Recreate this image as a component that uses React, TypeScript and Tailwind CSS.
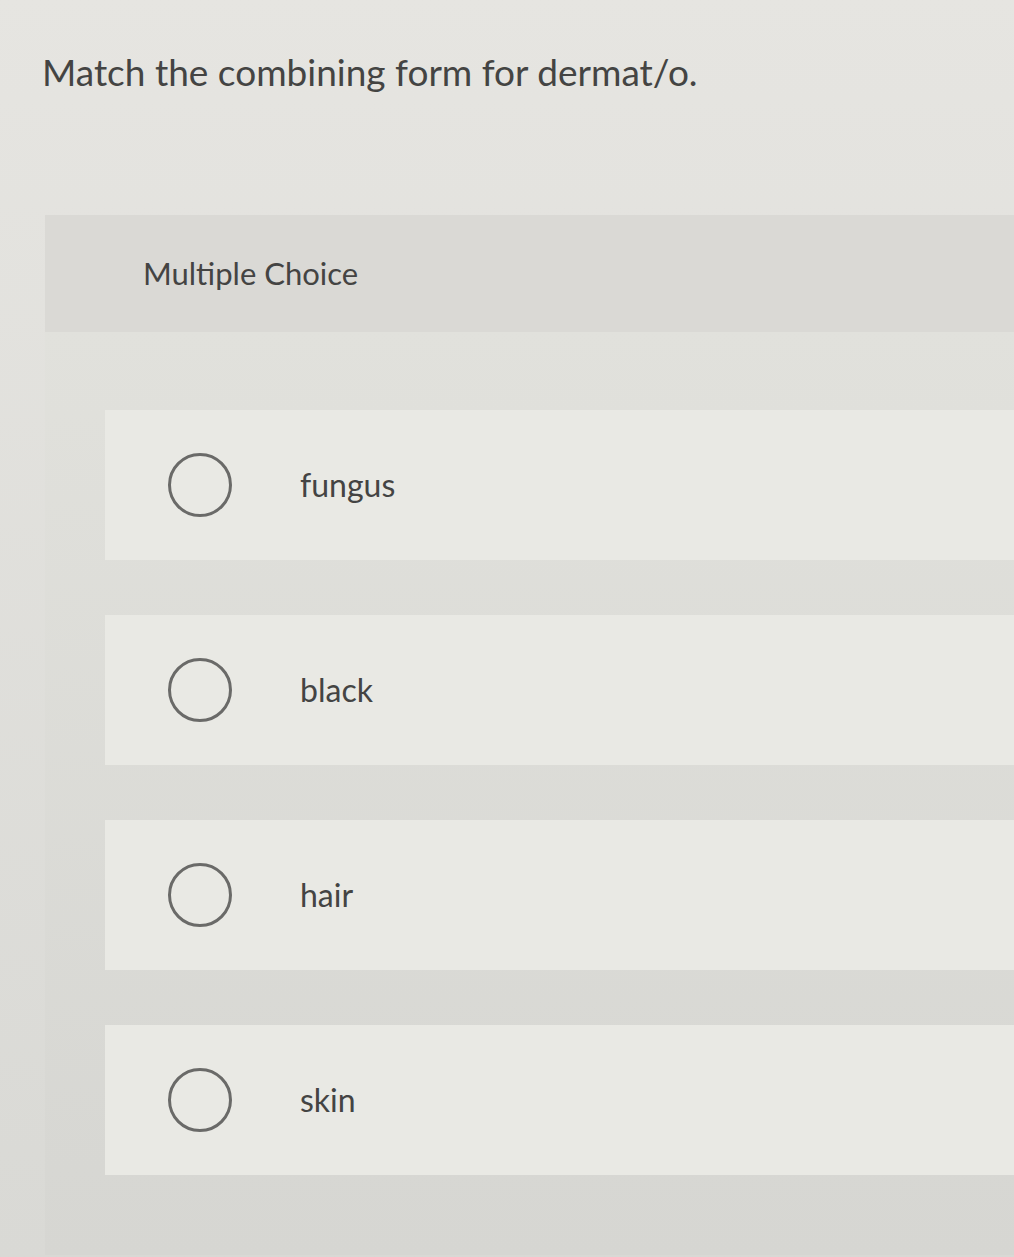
const OPTIONS = ['fungus', 'black', 'hair', 'skin']

function Radio() {
  return <span className="w-[64px] h-[64px] shrink-0 rounded-full border-[3px] border-[#6a6a68]" />
}

export default function App() {
  return (
    <div className="min-h-[1257px] bg-linear-to-b from-[#e6e5e1] to-[#d9d9d5] pt-[49px] font-['Lato',sans-serif] text-[#444443] overflow-hidden">
      <h1 className="px-[42px] text-[37px] leading-[46px]">Match the combining form for dermat/o.</h1>

      <section className="mt-[120px] ml-[45px] bg-[#dad9d5]">
        <div className="h-[117px] pl-[98px] flex items-center">
          <h2 className="text-[31px]">Multiple Choice</h2>
        </div>

        <div className="pl-[60px] pt-[78px] pb-[80px] flex flex-col gap-[55px] bg-linear-to-b from-[#e1e1dc] to-[#d6d6d2]">
          {OPTIONS.map(o => (
            <label key={o} className="h-[150px] flex items-center gap-[68px] pl-[63px] bg-[#e9e9e4]">
              <Radio />
              <span className="text-[32px]">{o}</span>
            </label>
          ))}
        </div>
      </section>
    </div>
  )
}
